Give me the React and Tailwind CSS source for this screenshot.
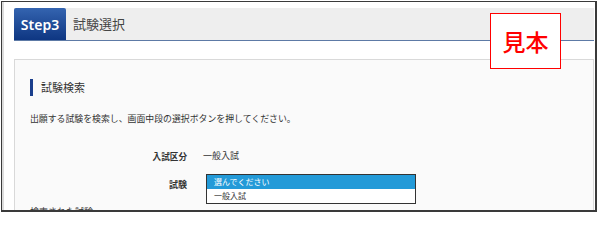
export default function App() {
  const jp = { fontFamily: '"Noto Sans CJK JP", "Noto Sans", sans-serif' };
  return (
    <div className="relative w-[600px] h-[214px] bg-white overflow-hidden" style={jp}>
      <div className="ml-[1px] mt-[1px] w-[596px] h-[211px] border-l border-t border-r-2 border-b-2 border-[#3a3a3a] overflow-hidden bg-white">
        <div className="h-full border-l-2 border-[#dcdcdc] pl-[10px] pt-[6px] pr-[1px]">
          {/* header */}
          <div className="flex h-[33px] bg-[#eeeeee] border-b border-[#5d7aa6]">
            <div className="w-[52px] flex items-center justify-center rounded-t-[2px] bg-gradient-to-b from-[#3464b0] to-[#0e3682] text-white text-[14px] font-semibold" style={{ fontFamily: '"Noto Sans", "Noto Sans CJK JP", sans-serif' }}>
              Step3
            </div>
            <div className="flex items-center pl-[7px] text-[13px] text-[#444]">試験選択</div>
          </div>
          {/* panel */}
          <div className="mt-[18px] h-[200px] border border-[#d9d9d9] bg-[#fafafa] pl-[15px] pt-[19px]">
            <div className="flex items-center h-[17px]">
              <div className="w-[3px] h-[17px] bg-[#1a3e8c]" />
              <div className="ml-[8px] text-[11px] leading-[17px] text-[#333]">試験検索</div>
            </div>
            <div className="mt-[16px] text-[8.9px] leading-[14px] text-[#333] whitespace-nowrap">
              出願する試験を検索し、画面中段の選択ボタンを押してください。
            </div>
            <div className="mt-[23px] flex h-[14px] items-center text-[8.6px] leading-[14px] text-[#333]">
              <div className="w-[157px] text-right font-bold">入試区分</div>
              <div className="ml-[16px] text-[9px]">一般入試</div>
            </div>
            <div className="mt-[11px] flex">
              <div className="w-[157px] text-right font-bold text-[9px] leading-[14px] mt-[4px] text-[#333]">試験</div>
              <div className="ml-[19px] w-[210px] h-[30px] border border-[#333] bg-white text-[8px] leading-[14px]">
                <div className="h-[14px] bg-[#239ad8] text-white pl-[7px]">選んでください</div>
                <div className="h-[14px] text-[#333] pl-[7px]">一般入試</div>
              </div>
            </div>
            <div className="mt-[1px] text-[9px] leading-[14px] text-[#333]">検索された試験</div>
          </div>
        </div>
      </div>
      <div className="absolute left-[490px] top-[13px] w-[71px] h-[56px] border border-[#ff0000] bg-white flex items-center justify-center text-[#ff0000] text-[23px] font-medium leading-none">
        見本
      </div>
    </div>
  );
}
